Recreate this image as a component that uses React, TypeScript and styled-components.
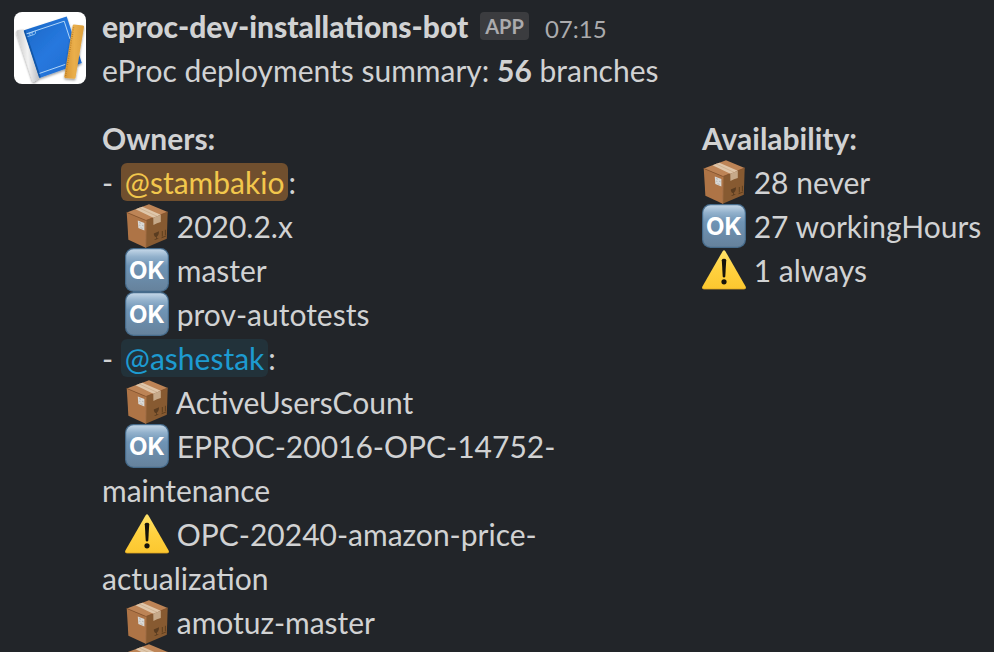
import React from "react";
import styled, { createGlobalStyle } from "styled-components";

const GlobalStyle = createGlobalStyle`
  * { box-sizing: border-box; }
  body {
    margin: 0;
    background: #222529;
    color: #d1d2d3;
    font-family: Lato, "Open Sans", sans-serif;
    font-size: 30px;
    line-height: 44px;
  }
`;

const Message = styled.article`
  display: flex;
  align-items: flex-start;
  gap: 16px;
  height: 100vh;
  padding: 4px 0 0 14px;
  overflow: hidden;
`;

const AvatarButton = styled.button`
  flex: none;
  width: 72px;
  height: 72px;
  margin: 8px 0 0;
  padding: 0;
  border: 0;
  border-radius: 8px;
  overflow: hidden;
  background: #fff;
  svg { display: block; }
`;

const Content = styled.div`
  flex: 1;
  min-width: 0;
`;

const Header = styled.header`
  display: flex;
  align-items: baseline;
  height: 44px;
  white-space: nowrap;
`;

const Sender = styled.a`
  color: inherit;
  font-weight: 900;
  text-decoration: none;
`;

const AppBadge = styled.span`
  align-self: flex-start;
  margin: 8px 16px 0 12px;
  padding: 0 5px;
  border-radius: 4px;
  background: #3b3c3f;
  color: #ababad;
  font-size: 20px;
  font-weight: 700;
  line-height: 28px;
`;

const Time = styled.a`
  color: #ababad;
  font-size: 24px;
  line-height: 28px;
  text-decoration: none;
`;

const Summary = styled.p`
  margin: 0;
`;

const Fields = styled.div`
  display: grid;
  grid-template-columns: 2fr 1fr;
  column-gap: 16px;
  margin-top: 24px;
`;

const FieldTitle = styled.h2`
  margin: 0;
  font-size: 30px;
  font-weight: 700;
`;

const List = styled.ul`
  margin: 0;
  padding: 0;
  list-style: none;
`;

const Item = styled.li`
  min-height: 44px;
`;

const Mention = styled.a<{ $self?: boolean }>`
  padding: 1px 4px;
  border-radius: 6px;
  text-decoration: none;
  color: ${(p) => (p.$self ? "#f2c74c" : "#1d9bd1")};
  background: ${(p) => (p.$self ? "#704f2e" : "#22323a")};
`;

const EmojiIcon = styled.svg`
  width: 44px;
  height: 44px;
  vertical-align: bottom;
`;

type Kind = "package" | "ok" | "warning";

function Emoji({ kind }: { kind: Kind }) {
  if (kind === "package") {
    return (
      <EmojiIcon viewBox="0 0 44 44" role="img" aria-label="package">
        <path d="M1.7 8.4 21 16.5 20.7 43.8 3.4 35.8Z" fill="#ae7446" />
        <path d="M21 16.5 42.7 8 41.8 34.7 20.7 43.8Z" fill="#875a31" />
        <path d="M1.7 8.4 24 .2 42.7 8 21 16.5Z" fill="#bd8456" />
        <path d="M1.7 8.4 21 16.5 42.7 8" fill="none" stroke="#8a562d" strokeWidth=".8" />
        <path d="M21 16.5 20.7 43.8" stroke="#bd8151" strokeWidth=".7" />
        <path d="M10.5 5.2 17.3 2.7 35.8 10.8 28.3 13.8Z" fill="#dfc6aa" />
        <path d="M14 3.9 32 12.3" stroke="#c9aa87" strokeWidth=".7" />
        <path d="M28.3 13.8 35.8 10.8V18L32 19.2 28.4 21Z" fill="#c6a989" />
        <path d="M12.8 16.4 19.4 19V26.6L13.3 24Z" fill="#d9d9d7" />
        <path d="M14 18.5 16 19.3M17 21.2 18.6 21.8M14 21 15.4 21.6M15.5 23.6 17.6 24.5" stroke="#aaa9a6" strokeWidth=".7" />
        <path d="M28.8 29.4 34 27.3C34 30.5 32.8 32.2 31.8 32.8V34.4L33.3 33.9V34.7L29.6 36V35.2L31 34.7V33C29.5 32.6 28.8 31.3 28.8 29.4Z" fill="#5a3c20" />
        <path d="M37.3 27V32.5M40.4 25.8V31.2M36.5 33.8 41 32" stroke="#60401f" strokeWidth="1" />
      </EmojiIcon>
    );
  }
  if (kind === "ok") {
    return (
      <EmojiIcon viewBox="0 0 44 44" role="img" aria-label="ok">
        <defs>
          <linearGradient id="okFace" x1="0" y1="0" x2="0" y2="1">
            <stop offset="0" stopColor="#c4d7e8" />
            <stop offset=".18" stopColor="#92b1cc" />
            <stop offset=".4" stopColor="#6f94b5" />
            <stop offset="1" stopColor="#66829c" />
          </linearGradient>
        </defs>
        <rect width="44" height="44" rx="8.5" fill="#466b8b" />
        <rect x="1.2" y="1.2" width="41.6" height="41.6" rx="7.5" fill="url(#okFace)" />
        <text x="22" y="31" textAnchor="middle" fill="#fff" fontFamily="Inter, sans-serif" fontSize="24" fontWeight="700">OK</text>
      </EmojiIcon>
    );
  }
  return (
    <EmojiIcon viewBox="0 0 44 44" role="img" aria-label="warning">
      <defs>
        <linearGradient id="warningFace" x1="0" y1="0" x2="0" y2="1">
          <stop offset="0" stopColor="#ffe36c" />
          <stop offset=".5" stopColor="#ffd13f" />
          <stop offset="1" stopColor="#fcc72f" />
        </linearGradient>
      </defs>
      <path d="M20.8 2.9Q22 1.6 23.2 2.9L43.6 38.5Q44.6 40.9 42.3 41H1.7Q-.6 40.9 .4 38.5Z" fill="url(#warningFace)" />
      <path d="M.7 40.2Q1 41 1.9 41H42.1Q43 41 43.3 40.2" fill="none" stroke="#dda322" strokeWidth=".8" />
      <path d="M19.8 12.2Q19.8 10.8 22 10.8T24.2 12.2L23.3 28.6Q23.1 29.6 22 29.6T20.7 28.6Z" fill="#16130b" />
      <circle cx="22" cy="33.8" r="2.6" fill="#16130b" />
    </EmojiIcon>
  );
}

function BlueprintLogo() {
  return (
    <svg width="72" height="72" viewBox="0 0 72 72" aria-hidden="true">
      <defs>
        <linearGradient id="cover" x1="0" y1="0" x2="1" y2="1">
          <stop offset="0" stopColor="#1766c4" />
          <stop offset=".5" stopColor="#2778de" />
          <stop offset="1" stopColor="#1d69cd" />
        </linearGradient>
        <linearGradient id="roll" x1="0" y1=".1" x2="1" y2="0">
          <stop offset="0" stopColor="#c9c9c9" />
          <stop offset=".45" stopColor="#f2f2f2" />
          <stop offset="1" stopColor="#aeb2b8" />
        </linearGradient>
        <linearGradient id="ruler" x1="0" y1="0" x2="1" y2="0">
          <stop offset="0" stopColor="#d79431" />
          <stop offset=".5" stopColor="#eaaf4c" />
          <stop offset="1" stopColor="#dda03d" />
        </linearGradient>
        <filter id="shade" x="-20%" y="-20%" width="150%" height="150%">
          <feDropShadow dx="0" dy="1.5" stdDeviation="1.2" floodOpacity=".4" />
        </filter>
      </defs>
      <g filter="url(#shade)">
        <path d="M2.4 20.5Q2 18.4 4 18L10 17.2 25.5 65.8 20.5 69.6Q19 70.4 18.4 68.8Z" fill="url(#roll)" />
        <path d="M10 18.2 52.7 4.4 67.8 51 25.5 66Z" fill="url(#cover)" />
      </g>
      <path d="M10.5 18.5 26 65.5" stroke="#1257a7" strokeWidth="1.8" />
      <path d="M12.5 21.8 50.2 9.2 56 27M25.5 61.4 51.3 52.4" fill="none" stroke="#bfe0fb" strokeWidth=".9" />
      <path d="M13.5 24.6 20.5 22.4Q22.3 21.6 21.2 18.8M14.3 21.7 19.4 20M15.4 21.4 16.3 23.6M17.8 20.6 18.4 22.6" fill="none" stroke="#a9d3f8" strokeWidth=".8" />
      <g filter="url(#shade)">
        <path d="M60 12.5 69 13.4Q70.2 13.6 70 14.9L61.5 65.8Q61.3 66.9 60.2 66.8L51.3 65.9Q50.1 65.7 50.3 64.6L58.7 13.5Q59 12.4 60 12.5Z" fill="url(#ruler)" />
      </g>
      <path d="M59.6 15.5 51.6 64" stroke="#a8701f" strokeWidth="1.3" strokeDasharray=".6 1.6" />
    </svg>
  );
}

function Entry({ kind, children, indent }: { kind: Kind; children?: React.ReactNode; indent?: boolean }) {
  return (
    <Item>
      {indent && "\u00a0\u00a0\u00a0"}
      <Emoji kind={kind} /> {children}
    </Item>
  );
}

export default function App() {
  return (
    <>
      <GlobalStyle />
      <Message>
        <AvatarButton aria-label="View app profile">
          <BlueprintLogo />
        </AvatarButton>
        <Content>
          <Header>
            <Sender href="#app">eproc-dev-installations-bot</Sender>
            <AppBadge>APP</AppBadge>
            <Time href="#message">07:15</Time>
          </Header>
          <Summary>
            eProc deployments summary: <b>56</b> branches
          </Summary>
          <Fields>
            <section>
              <FieldTitle>Owners:</FieldTitle>
              <List>
                <Item>
                  - <Mention href="#stambakio" $self>@stambakio</Mention>:
                </Item>
                <Entry indent kind="package">2020.2.x</Entry>
                <Entry indent kind="ok">master</Entry>
                <Entry indent kind="ok">prov-autotests</Entry>
                <Item>
                  - <Mention href="#ashestak">@ashestak</Mention>:
                </Item>
                <Entry indent kind="package">ActiveUsersCount</Entry>
                <Entry indent kind="ok">EPROC-20016-OPC-14752-maintenance</Entry>
                <Entry indent kind="warning">OPC-20240-amazon-price-actualization</Entry>
                <Entry indent kind="package">amotuz-master</Entry>
                <Entry indent kind="package" />
              </List>
            </section>
            <section>
              <FieldTitle>Availability:</FieldTitle>
              <List>
                <Entry kind="package">28 never</Entry>
                <Entry kind="ok">27 workingHours</Entry>
                <Entry kind="warning">1 always</Entry>
              </List>
            </section>
          </Fields>
        </Content>
      </Message>
    </>
  );
}
